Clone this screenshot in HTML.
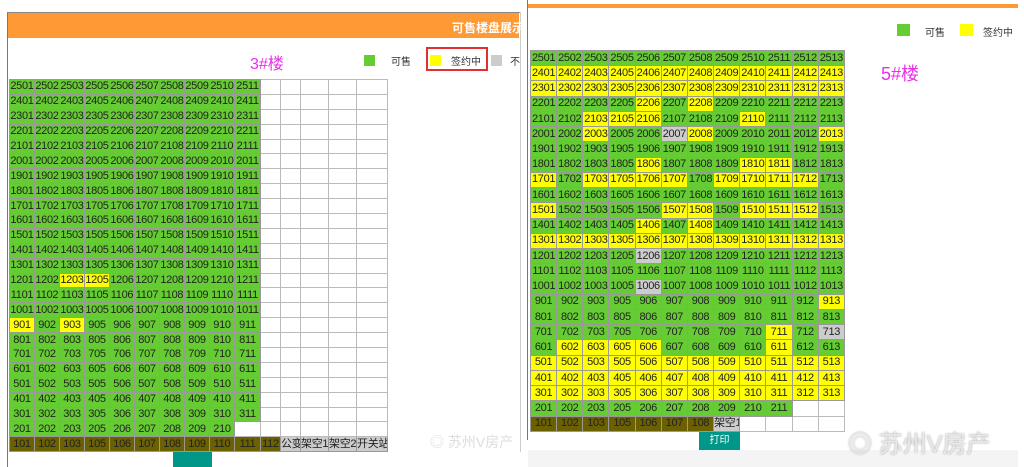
<!DOCTYPE html>
<html><head><meta charset="utf-8"><style>
*{margin:0;padding:0;box-sizing:border-box}
body{width:1024px;height:467px;background:#fff;position:relative;overflow:hidden;font-family:"Liberation Sans","Noto Sans CJK SC",sans-serif}
.a{position:absolute}
table{position:absolute;border-collapse:collapse;table-layout:fixed;font-size:11px;color:#222}
td{border:1px solid #999;text-align:center;padding:0;background:#66cc33;white-space:nowrap;overflow:hidden;line-height:13px;letter-spacing:-0.3px}
td.y{background:#ffff00}td.s{background:#cccccc}td.o{background:#6b6100}td.w{background:#fff;border-color:#bbb}
#L td{height:14.9px}#R td{height:15.24px}
</style></head><body>
<div class="a" style="left:7px;top:12px;width:1px;height:455px;background:#777"></div>
<div class="a" style="left:7px;top:12px;width:514px;height:1px;background:#888"></div>
<div class="a" style="left:520px;top:12px;width:1px;height:440px;background:#ccc"></div>
<div class="a" style="left:8px;top:13px;width:511px;height:25px;background:#ff9933"></div>
<div class="a" style="left:452px;top:19px;color:#fff;font-size:12px;font-weight:bold">可售楼盘展示</div>
<div class="a" style="left:250px;top:50px;color:#e830e8;font-size:16px">3#楼</div>
<div class="a" style="left:364px;top:55px;width:11px;height:11px;background:#66cc33"></div>
<div class="a" style="left:391px;top:53px;font-size:10px;color:#333">可售</div>
<div class="a" style="left:426px;top:47px;width:62px;height:24px;border:2px solid #e03030"></div>
<div class="a" style="left:430px;top:55px;width:11px;height:11px;background:#ffff00"></div>
<div class="a" style="left:451px;top:53px;font-size:10px;color:#333">签约中</div>
<div class="a" style="left:491px;top:55px;width:11px;height:11px;background:#ccc"></div>
<div class="a" style="left:510px;top:53px;font-size:10px;color:#333">不</div>
<table id="L" style="left:9px;top:79px;width:378px">
<colgroup><col style="width:25px"><col style="width:25px"><col style="width:25px"><col style="width:25px"><col style="width:25px"><col style="width:25px"><col style="width:25px"><col style="width:25px"><col style="width:25px"><col style="width:26px"><col style="width:20px"><col style="width:20px"><col style="width:28px"><col style="width:28px"><col style="width:31px"></colgroup>
<tr><td>2501</td><td>2502</td><td>2503</td><td>2505</td><td>2506</td><td>2507</td><td>2508</td><td>2509</td><td>2510</td><td>2511</td><td class="w"></td><td class="w"></td><td class="w"></td><td class="w"></td><td class="w"></td></tr>
<tr><td>2401</td><td>2402</td><td>2403</td><td>2405</td><td>2406</td><td>2407</td><td>2408</td><td>2409</td><td>2410</td><td>2411</td><td class="w"></td><td class="w"></td><td class="w"></td><td class="w"></td><td class="w"></td></tr>
<tr><td>2301</td><td>2302</td><td>2303</td><td>2305</td><td>2306</td><td>2307</td><td>2308</td><td>2309</td><td>2310</td><td>2311</td><td class="w"></td><td class="w"></td><td class="w"></td><td class="w"></td><td class="w"></td></tr>
<tr><td>2201</td><td>2202</td><td>2203</td><td>2205</td><td>2206</td><td>2207</td><td>2208</td><td>2209</td><td>2210</td><td>2211</td><td class="w"></td><td class="w"></td><td class="w"></td><td class="w"></td><td class="w"></td></tr>
<tr><td>2101</td><td>2102</td><td>2103</td><td>2105</td><td>2106</td><td>2107</td><td>2108</td><td>2109</td><td>2110</td><td>2111</td><td class="w"></td><td class="w"></td><td class="w"></td><td class="w"></td><td class="w"></td></tr>
<tr><td>2001</td><td>2002</td><td>2003</td><td>2005</td><td>2006</td><td>2007</td><td>2008</td><td>2009</td><td>2010</td><td>2011</td><td class="w"></td><td class="w"></td><td class="w"></td><td class="w"></td><td class="w"></td></tr>
<tr><td>1901</td><td>1902</td><td>1903</td><td>1905</td><td>1906</td><td>1907</td><td>1908</td><td>1909</td><td>1910</td><td>1911</td><td class="w"></td><td class="w"></td><td class="w"></td><td class="w"></td><td class="w"></td></tr>
<tr><td>1801</td><td>1802</td><td>1803</td><td>1805</td><td>1806</td><td>1807</td><td>1808</td><td>1809</td><td>1810</td><td>1811</td><td class="w"></td><td class="w"></td><td class="w"></td><td class="w"></td><td class="w"></td></tr>
<tr><td>1701</td><td>1702</td><td>1703</td><td>1705</td><td>1706</td><td>1707</td><td>1708</td><td>1709</td><td>1710</td><td>1711</td><td class="w"></td><td class="w"></td><td class="w"></td><td class="w"></td><td class="w"></td></tr>
<tr><td>1601</td><td>1602</td><td>1603</td><td>1605</td><td>1606</td><td>1607</td><td>1608</td><td>1609</td><td>1610</td><td>1611</td><td class="w"></td><td class="w"></td><td class="w"></td><td class="w"></td><td class="w"></td></tr>
<tr><td>1501</td><td>1502</td><td>1503</td><td>1505</td><td>1506</td><td>1507</td><td>1508</td><td>1509</td><td>1510</td><td>1511</td><td class="w"></td><td class="w"></td><td class="w"></td><td class="w"></td><td class="w"></td></tr>
<tr><td>1401</td><td>1402</td><td>1403</td><td>1405</td><td>1406</td><td>1407</td><td>1408</td><td>1409</td><td>1410</td><td>1411</td><td class="w"></td><td class="w"></td><td class="w"></td><td class="w"></td><td class="w"></td></tr>
<tr><td>1301</td><td>1302</td><td>1303</td><td>1305</td><td>1306</td><td>1307</td><td>1308</td><td>1309</td><td>1310</td><td>1311</td><td class="w"></td><td class="w"></td><td class="w"></td><td class="w"></td><td class="w"></td></tr>
<tr><td>1201</td><td>1202</td><td class="y">1203</td><td class="y">1205</td><td>1206</td><td>1207</td><td>1208</td><td>1209</td><td>1210</td><td>1211</td><td class="w"></td><td class="w"></td><td class="w"></td><td class="w"></td><td class="w"></td></tr>
<tr><td>1101</td><td>1102</td><td>1103</td><td>1105</td><td>1106</td><td>1107</td><td>1108</td><td>1109</td><td>1110</td><td>1111</td><td class="w"></td><td class="w"></td><td class="w"></td><td class="w"></td><td class="w"></td></tr>
<tr><td>1001</td><td>1002</td><td>1003</td><td>1005</td><td>1006</td><td>1007</td><td>1008</td><td>1009</td><td>1010</td><td>1011</td><td class="w"></td><td class="w"></td><td class="w"></td><td class="w"></td><td class="w"></td></tr>
<tr><td class="y">901</td><td>902</td><td class="y">903</td><td>905</td><td>906</td><td>907</td><td>908</td><td>909</td><td>910</td><td>911</td><td class="w"></td><td class="w"></td><td class="w"></td><td class="w"></td><td class="w"></td></tr>
<tr><td>801</td><td>802</td><td>803</td><td>805</td><td>806</td><td>807</td><td>808</td><td>809</td><td>810</td><td>811</td><td class="w"></td><td class="w"></td><td class="w"></td><td class="w"></td><td class="w"></td></tr>
<tr><td>701</td><td>702</td><td>703</td><td>705</td><td>706</td><td>707</td><td>708</td><td>709</td><td>710</td><td>711</td><td class="w"></td><td class="w"></td><td class="w"></td><td class="w"></td><td class="w"></td></tr>
<tr><td>601</td><td>602</td><td>603</td><td>605</td><td>606</td><td>607</td><td>608</td><td>609</td><td>610</td><td>611</td><td class="w"></td><td class="w"></td><td class="w"></td><td class="w"></td><td class="w"></td></tr>
<tr><td>501</td><td>502</td><td>503</td><td>505</td><td>506</td><td>507</td><td>508</td><td>509</td><td>510</td><td>511</td><td class="w"></td><td class="w"></td><td class="w"></td><td class="w"></td><td class="w"></td></tr>
<tr><td>401</td><td>402</td><td>403</td><td>405</td><td>406</td><td>407</td><td>408</td><td>409</td><td>410</td><td>411</td><td class="w"></td><td class="w"></td><td class="w"></td><td class="w"></td><td class="w"></td></tr>
<tr><td>301</td><td>302</td><td>303</td><td>305</td><td>306</td><td>307</td><td>308</td><td>309</td><td>310</td><td>311</td><td class="w"></td><td class="w"></td><td class="w"></td><td class="w"></td><td class="w"></td></tr>
<tr><td>201</td><td>202</td><td>203</td><td>205</td><td>206</td><td>207</td><td>208</td><td>209</td><td>210</td><td class="w"></td><td class="w"></td><td class="w"></td><td class="w"></td><td class="w"></td><td class="w"></td></tr>
<tr><td class="o">101</td><td class="o">102</td><td class="o">103</td><td class="o">105</td><td class="o">106</td><td class="o">107</td><td class="o">108</td><td class="o">109</td><td class="o">110</td><td class="o">111</td><td class="o">112</td><td class="s">公变</td><td class="s">架空1</td><td class="s">架空2</td><td class="s">开关站</td></tr>
</table>
<div class="a" style="left:173px;top:452px;width:39px;height:15px;background:#009688"></div>
<div class="a" style="left:430px;top:432px;color:#ddd;font-size:14px">◎ 苏州V房产</div>

<div class="a" style="left:527px;top:0;width:1px;height:440px;background:#777"></div>
<div class="a" style="left:528px;top:4px;width:490px;height:4px;background:#ff9933"></div>
<div class="a" style="left:897px;top:24px;width:13px;height:12px;background:#66cc33"></div>
<div class="a" style="left:925px;top:24px;font-size:10px;color:#333">可售</div>
<div class="a" style="left:960px;top:24px;width:13px;height:12px;background:#ffff00"></div>
<div class="a" style="left:983px;top:24px;font-size:10px;color:#333">签约中</div>
<div class="a" style="left:881px;top:60px;color:#e830e8;font-size:18px">5#楼</div>
<table id="R" style="left:530px;top:50px;width:315px">
<tr><td>2501</td><td>2502</td><td>2503</td><td>2505</td><td>2506</td><td>2507</td><td>2508</td><td>2509</td><td>2510</td><td>2511</td><td>2512</td><td>2513</td></tr>
<tr><td class="y">2401</td><td class="y">2402</td><td class="y">2403</td><td class="y">2405</td><td class="y">2406</td><td class="y">2407</td><td class="y">2408</td><td class="y">2409</td><td class="y">2410</td><td class="y">2411</td><td class="y">2412</td><td class="y">2413</td></tr>
<tr><td class="y">2301</td><td class="y">2302</td><td class="y">2303</td><td class="y">2305</td><td class="y">2306</td><td class="y">2307</td><td class="y">2308</td><td class="y">2309</td><td class="y">2310</td><td class="y">2311</td><td class="y">2312</td><td class="y">2313</td></tr>
<tr><td>2201</td><td>2202</td><td>2203</td><td>2205</td><td class="y">2206</td><td>2207</td><td class="y">2208</td><td>2209</td><td>2210</td><td>2211</td><td>2212</td><td>2213</td></tr>
<tr><td>2101</td><td>2102</td><td class="y">2103</td><td class="y">2105</td><td class="y">2106</td><td>2107</td><td>2108</td><td>2109</td><td class="y">2110</td><td>2111</td><td>2112</td><td>2113</td></tr>
<tr><td>2001</td><td>2002</td><td class="y">2003</td><td>2005</td><td>2006</td><td class="s">2007</td><td class="y">2008</td><td>2009</td><td>2010</td><td>2011</td><td>2012</td><td class="y">2013</td></tr>
<tr><td>1901</td><td>1902</td><td>1903</td><td>1905</td><td>1906</td><td>1907</td><td>1908</td><td>1909</td><td>1910</td><td>1911</td><td>1912</td><td>1913</td></tr>
<tr><td>1801</td><td>1802</td><td>1803</td><td>1805</td><td class="y">1806</td><td>1807</td><td>1808</td><td>1809</td><td class="y">1810</td><td class="y">1811</td><td>1812</td><td>1813</td></tr>
<tr><td class="y">1701</td><td>1702</td><td class="y">1703</td><td class="y">1705</td><td class="y">1706</td><td class="y">1707</td><td>1708</td><td class="y">1709</td><td class="y">1710</td><td class="y">1711</td><td class="y">1712</td><td>1713</td></tr>
<tr><td>1601</td><td>1602</td><td>1603</td><td>1605</td><td>1606</td><td>1607</td><td>1608</td><td>1609</td><td>1610</td><td>1611</td><td>1612</td><td>1613</td></tr>
<tr><td class="y">1501</td><td>1502</td><td>1503</td><td>1505</td><td>1506</td><td class="y">1507</td><td class="y">1508</td><td>1509</td><td class="y">1510</td><td class="y">1511</td><td class="y">1512</td><td>1513</td></tr>
<tr><td>1401</td><td>1402</td><td>1403</td><td>1405</td><td class="y">1406</td><td>1407</td><td class="y">1408</td><td>1409</td><td>1410</td><td>1411</td><td>1412</td><td>1413</td></tr>
<tr><td class="y">1301</td><td class="y">1302</td><td class="y">1303</td><td class="y">1305</td><td class="y">1306</td><td class="y">1307</td><td class="y">1308</td><td class="y">1309</td><td class="y">1310</td><td class="y">1311</td><td class="y">1312</td><td class="y">1313</td></tr>
<tr><td>1201</td><td>1202</td><td>1203</td><td>1205</td><td class="s">1206</td><td>1207</td><td>1208</td><td>1209</td><td>1210</td><td>1211</td><td>1212</td><td>1213</td></tr>
<tr><td>1101</td><td>1102</td><td>1103</td><td>1105</td><td>1106</td><td>1107</td><td>1108</td><td>1109</td><td>1110</td><td>1111</td><td>1112</td><td>1113</td></tr>
<tr><td>1001</td><td>1002</td><td>1003</td><td>1005</td><td class="s">1006</td><td>1007</td><td>1008</td><td>1009</td><td>1010</td><td>1011</td><td>1012</td><td>1013</td></tr>
<tr><td>901</td><td>902</td><td>903</td><td>905</td><td>906</td><td>907</td><td>908</td><td>909</td><td>910</td><td>911</td><td>912</td><td class="y">913</td></tr>
<tr><td>801</td><td>802</td><td>803</td><td>805</td><td>806</td><td>807</td><td>808</td><td>809</td><td>810</td><td>811</td><td>812</td><td>813</td></tr>
<tr><td>701</td><td>702</td><td>703</td><td>705</td><td>706</td><td>707</td><td>708</td><td>709</td><td>710</td><td class="y">711</td><td>712</td><td class="s">713</td></tr>
<tr><td>601</td><td class="y">602</td><td class="y">603</td><td class="y">605</td><td class="y">606</td><td>607</td><td>608</td><td>609</td><td>610</td><td class="y">611</td><td>612</td><td>613</td></tr>
<tr><td class="y">501</td><td class="y">502</td><td class="y">503</td><td class="y">505</td><td class="y">506</td><td class="y">507</td><td class="y">508</td><td class="y">509</td><td class="y">510</td><td class="y">511</td><td class="y">512</td><td class="y">513</td></tr>
<tr><td class="y">401</td><td class="y">402</td><td class="y">403</td><td class="y">405</td><td class="y">406</td><td class="y">407</td><td class="y">408</td><td class="y">409</td><td class="y">410</td><td class="y">411</td><td class="y">412</td><td class="y">413</td></tr>
<tr><td class="y">301</td><td class="y">302</td><td class="y">303</td><td class="y">305</td><td class="y">306</td><td class="y">307</td><td class="y">308</td><td class="y">309</td><td class="y">310</td><td class="y">311</td><td class="y">312</td><td class="y">313</td></tr>
<tr><td>201</td><td>202</td><td>203</td><td>205</td><td>206</td><td>207</td><td>208</td><td>209</td><td>210</td><td>211</td><td class="w"></td><td class="w"></td></tr>
<tr><td class="o">101</td><td class="o">102</td><td class="o">103</td><td class="o">105</td><td class="o">106</td><td class="o">107</td><td class="o">108</td><td class="s">架空1</td><td class="w"></td><td class="w"></td><td class="w"></td><td class="w"></td></tr>
</table>
<div class="a" style="left:699px;top:432px;width:41px;height:18px;background:#009688;color:#fff;font-size:10px;text-align:center;line-height:18px">打印</div>
<div class="a" style="left:528px;top:450px;width:490px;height:17px;background:#f4f4f4"></div>
<div class="a" style="left:848px;top:424px;color:#e8e8e8;font-size:24px;text-shadow:0 0 2px #999">◎ 苏州V房产</div>
</body></html>
